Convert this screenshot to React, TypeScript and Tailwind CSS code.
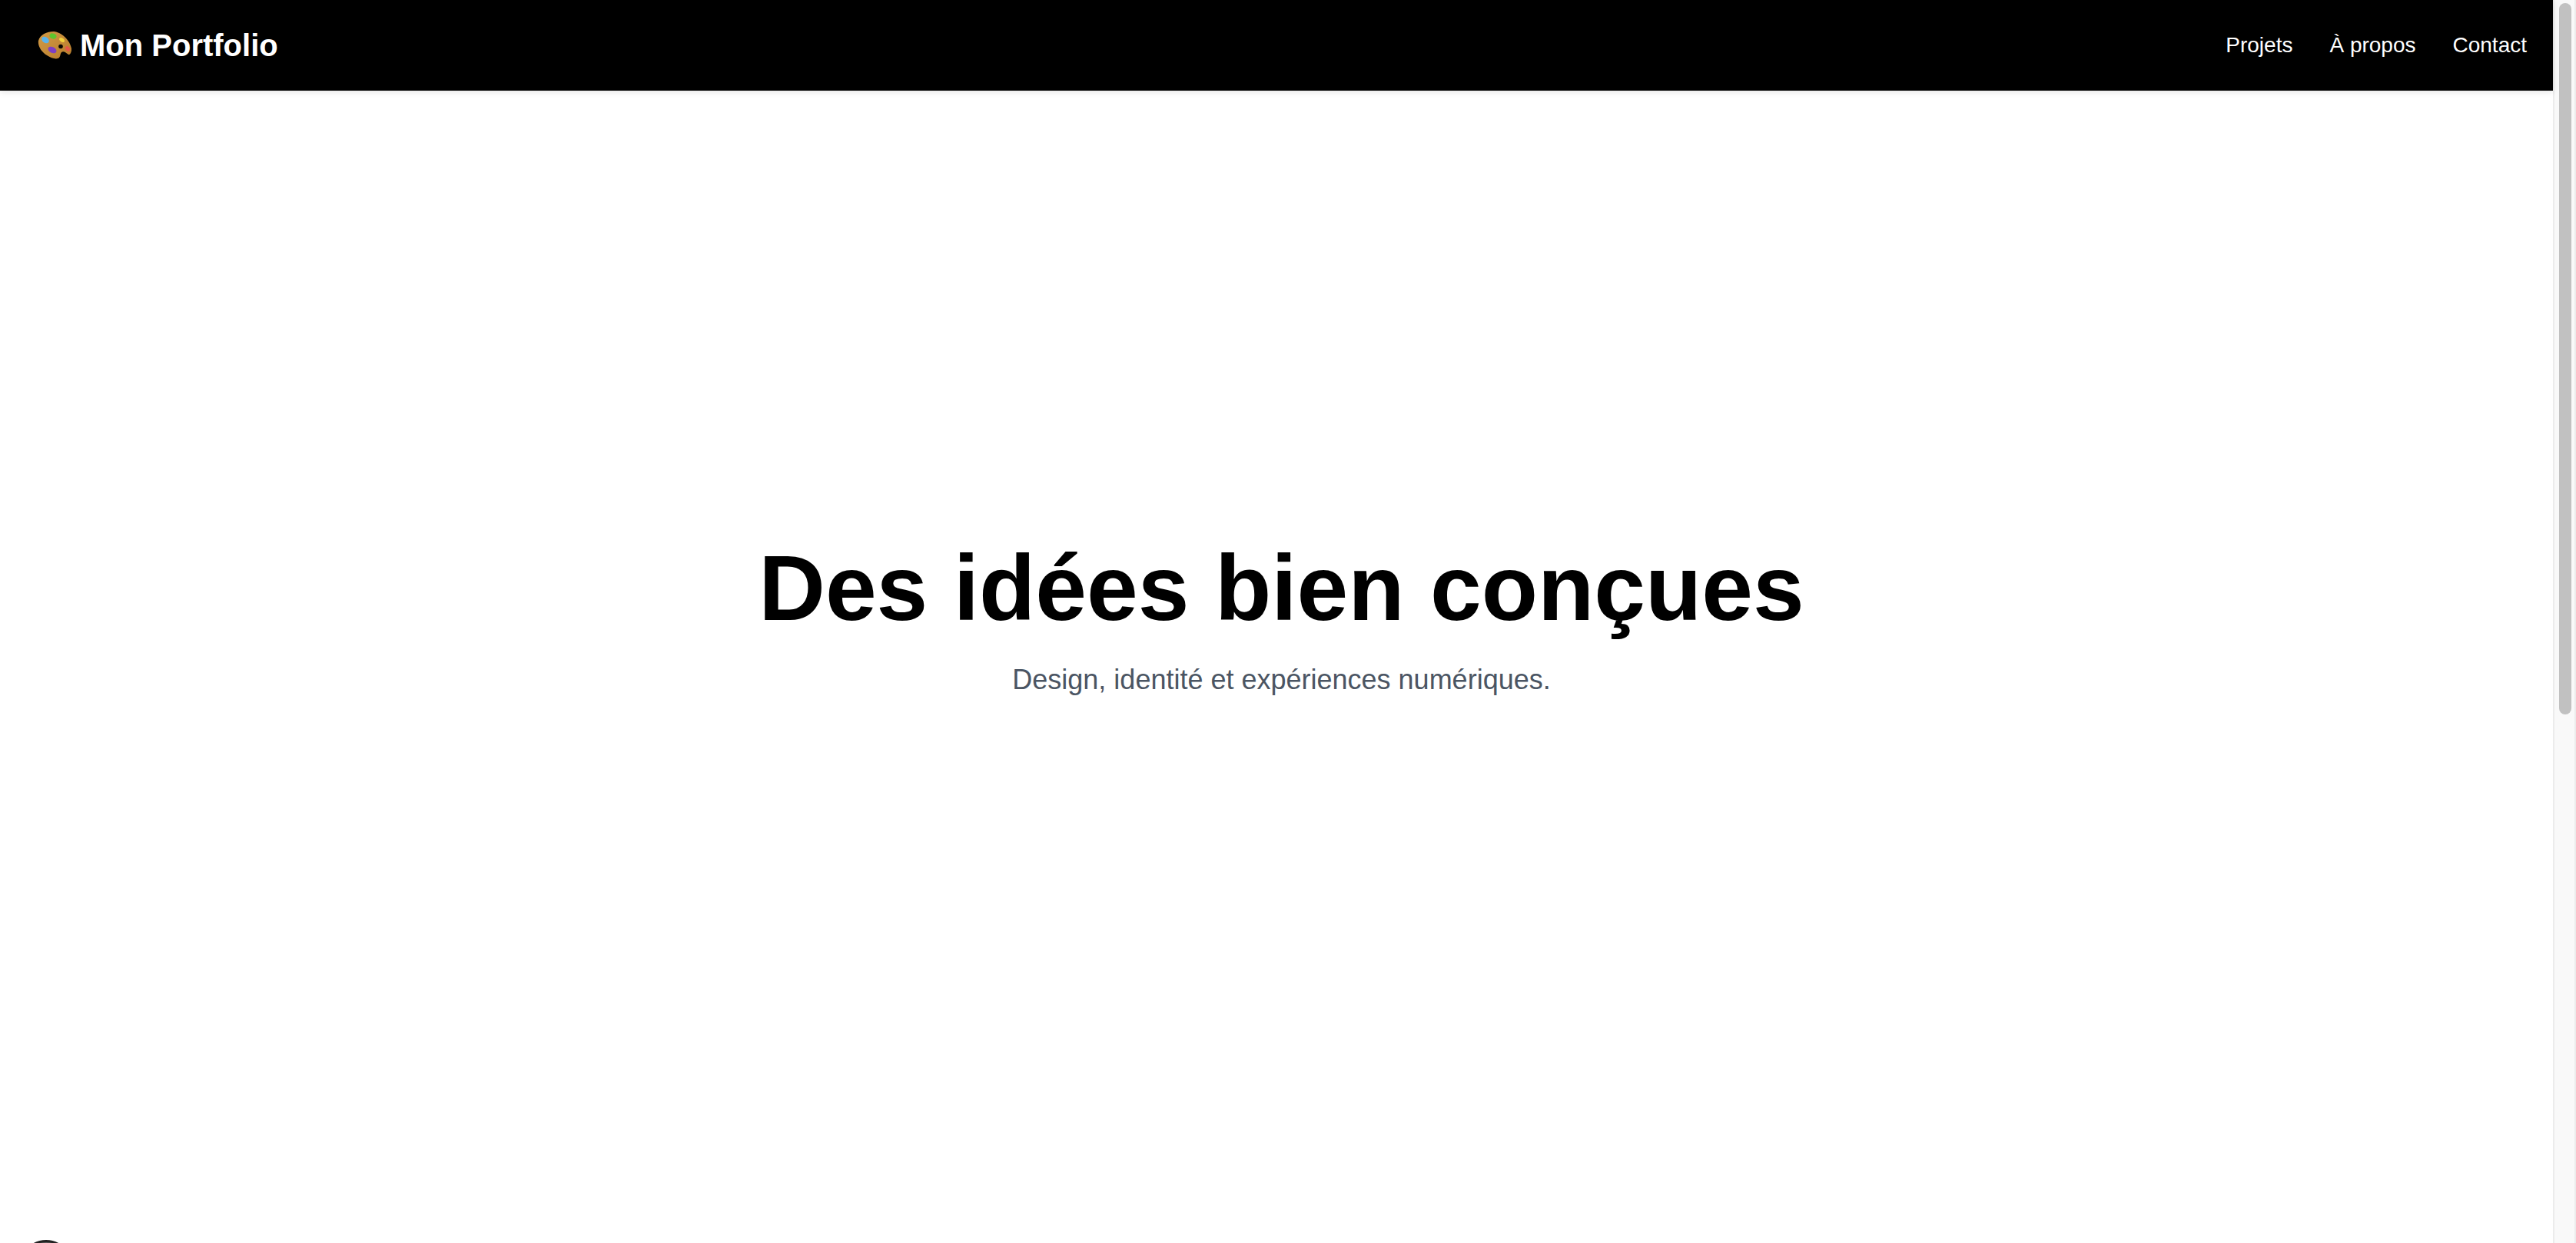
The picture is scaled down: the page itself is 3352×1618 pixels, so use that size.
function Palette() {
  return (
    <svg width="44" height="36" viewBox="0 0 44 36" className="shrink-0">
      <defs>
        <linearGradient id="wood" x1="0" y1="0" x2="1" y2="1">
          <stop offset="0" stopColor="#d39a45" />
          <stop offset="1" stopColor="#b67c2c" />
        </linearGradient>
      </defs>
      <path
        d="M1 12C3 4 12 0 21 0C31 1 42 11 44 22C44.5 27 42 31 40 30C37 28 34 25 31 27C29 29 30 32 28 34C25 37 18 35 12 31C5 27 0 19 1 12Z"
        fill="url(#wood)"
      />
      <ellipse cx="10" cy="11" rx="5.2" ry="3.8" transform="rotate(35 10 11)" fill="#5ab4ec" />
      <ellipse cx="20" cy="6" rx="4.6" ry="3.4" transform="rotate(20 20 6)" fill="#5ec52e" />
      <ellipse cx="31.5" cy="11" rx="3.8" ry="2.4" transform="rotate(35 31.5 11)" fill="#f2d23c" />
      <circle cx="30" cy="19.5" r="2.8" fill="#0b0702" />
      <ellipse cx="39" cy="22.5" rx="3.6" ry="2.6" transform="rotate(50 39 22.5)" fill="#e5574a" />
      <ellipse cx="19" cy="24" rx="5.8" ry="3.8" transform="rotate(25 19 24)" fill="#7d3fc4" />
    </svg>
  );
}

export default function App() {
  return (
    <div className="flex h-screen overflow-hidden bg-white font-['Liberation_Sans',Arial,sans-serif]">
      <div className="min-w-0 flex-1">
        <header className="relative flex h-[118px] items-center justify-between bg-black pl-[49px] pr-[34px] shadow-[0_2px_8px_rgba(0,0,0,0.1)]">
          <div className="flex items-center gap-[11px] text-[40px] font-bold text-white">
            <Palette />
            <span>Mon Portfolio</span>
          </div>
          <nav className="flex gap-[48px] text-[28px] text-white">
            <a>Projets</a>
            <a>À propos</a>
            <a>Contact</a>
          </nav>
        </header>
        <main className="flex h-[1378px] flex-col items-center justify-center pl-[13px] pt-[4px] text-center">
          <h1 className="text-[120px] font-bold leading-none text-black">Des idées bien conçues</h1>
          <p className="mt-[32px] text-[36px] leading-[56px] text-[#4b5563]">Design, identité et expériences numériques.</p>
        </main>
        <section className="pl-[26px] pt-[118px]">
          <div className="h-[68px] w-[68px] rounded-full border-[3px] border-[#222222] bg-[#5a5a5a]" />
        </section>
      </div>
      <div className="h-full w-[30px] shrink-0 border-x-2 border-[#ececec] bg-[#f9f9f9] pl-[6px] pt-[4px]">
        <div className="h-[926px] w-[16px] rounded-full bg-[#c1c1c1]" />
      </div>
    </div>
  );
}
